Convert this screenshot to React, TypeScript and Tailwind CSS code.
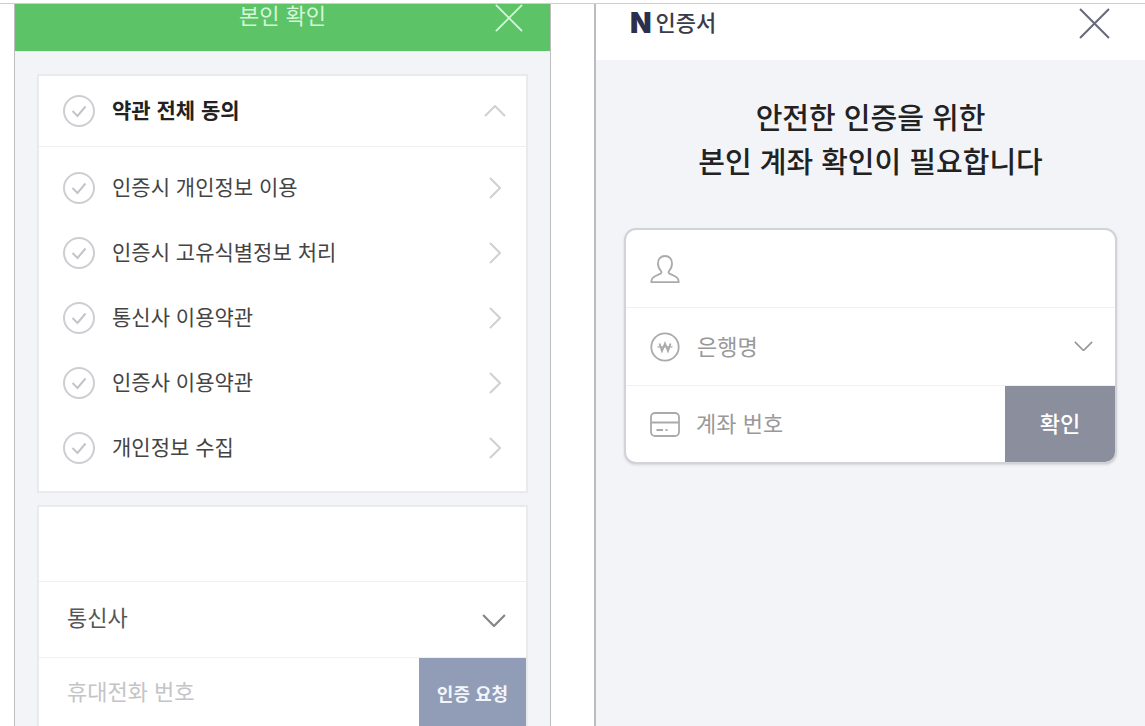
import type { ReactNode } from 'react'

const terms = [
  { id: 'privacy', label: '인증시 개인정보 이용' },
  { id: 'identifier', label: '인증시 고유식별정보 처리' },
  { id: 'carrier', label: '통신사 이용약관' },
  { id: 'certifier', label: '인증사 이용약관' },
  { id: 'collection', label: '개인정보 수집' },
]

function CloseIcon({ className }: { className: string }) {
  return (
    <svg viewBox="0 0 30 30" fill="none" stroke="currentColor" className={className} aria-hidden="true">
      <path d="M1 1l28 28M29 1L1 29" />
    </svg>
  )
}

function Chevron({ className }: { className: string }) {
  return (
    <svg viewBox="0 0 22 12" fill="none" stroke="currentColor" className={className} aria-hidden="true">
      <path d="M1 1l10 10L21 1" />
    </svg>
  )
}

function UserIcon() {
  return (
    <svg viewBox="0 0 30 30" fill="none" stroke="currentColor" strokeWidth="1.8" strokeLinejoin="round" className="size-[30px]" aria-hidden="true">
      <path d="M15 2c-4.600 0-7 3.200-7 7.600 0 3.400 1.300 5.700 3 7.500.8.9.5 2-.5 2.500l-5.500 2.600C2.400 23.500 1.300 25.200 1.300 28.200h27.400c0-3-1.100-4.700-3.700-6l-5.500-2.600c-1-.5-1.300-1.600-.5-2.500 1.700-1.800 3-4.100 3-7.500C22 5.200 19.600 2 15 2z" />
    </svg>
  )
}

function WonIcon() {
  return (
    <svg viewBox="0 0 30 30" fill="none" stroke="currentColor" strokeWidth="1.800" className="size-[30px]" aria-hidden="true">
      <circle cx="15" cy="15" r="13.700" />
      <path d="M9.500 11.500l2.500 7.500 3-7.500 3 7.500 2.500-7.500" strokeWidth="1.900" />
      <path d="M7.500 14.800h15" strokeWidth="1.200" />
    </svg>
  )
}

function CardIcon() {
  return (
    <svg viewBox="0 0 30 30" fill="none" stroke="currentColor" strokeWidth="1.800" className="size-[30px]" aria-hidden="true">
      <rect x="1" y="4" width="28" height="23" rx="4" />
      <path d="M1 13.500h28M6.500 21h6.500M15.500 21h2" />
    </svg>
  )
}

function RoundCheck({ id, label, bold }: { id: string; label: string; bold?: boolean }) {
  return (
    <div className="flex items-center gap-[17px]">
      <span className="relative size-8 shrink-0">
        <input
          id={id}
          type="checkbox"
          className="block size-8 appearance-none rounded-full border-2 border-[#cdced2] checked:border-[#5cc466]"
        />
        <svg
          viewBox="0 0 32 32"
          fill="none"
          stroke="#c3c4c8"
          strokeWidth="2"
          className="pointer-events-none absolute inset-0 size-8"
          aria-hidden="true"
        >
          <path d="M9.500 16l5 5 8-9.500" />
        </svg>
      </span>
      <label
        htmlFor={id}
        className={bold ? 'pb-1 text-[21px] leading-7 font-bold text-[#222]' : 'pb-1 text-[21px] leading-7 text-[#444]'}
      >
        {label}
      </label>
    </div>
  )
}

function FieldRow({ icon, children }: { icon: ReactNode; children?: ReactNode }) {
  return (
    <div className="flex h-[78px] items-center gap-[17px] border-b border-[#f0f0f2] pl-6 text-[#aaa]">
      {icon}
      {children}
    </div>
  )
}

function IdentityPanel() {
  return (
    <section className="border-x border-[#bdbdbf] bg-[#f3f4f8]">
      <header className="grid h-12 grid-cols-[1fr_auto_1fr] items-start border-b border-[#e4f5e6] bg-[#5cc466] text-[#d3f8d8]">
        <h1 className="col-start-2 text-[22px] leading-5">본인 확인</h1>
        <button type="button" aria-label="닫기" className="mr-[27px] justify-self-end">
          <CloseIcon className="size-7 stroke-2" />
        </button>
      </header>

      <div className="px-[22px] pt-[22px]">
        <div className="border-2 border-[#e9eaee] bg-white">
          <div className="flex h-[71px] items-center justify-between border-b border-[#efeff1] pr-5 pl-6">
            <RoundCheck id="all" label="약관 전체 동의" bold />
            <button type="button" aria-label="접기" className="text-[#d0d0d2]">
              <Chevron className="w-[22px] rotate-180 stroke-2" />
            </button>
          </div>
          <ul className="pt-2 pb-[11px]">
            {terms.map((term) => (
              <li key={term.id} className="flex h-[65px] items-center justify-between pr-5 pl-6">
                <RoundCheck id={term.id} label={term.label} />
                <button type="button" aria-label={`${term.label} 보기`} className="text-[#d0d0d2]">
                  <Chevron className="w-[22px] -rotate-90 stroke-2" />
                </button>
              </li>
            ))}
          </ul>
        </div>

        <form className="mt-3 border-2 border-b-0 border-[#e9eaee] bg-white">
          <input aria-label="이름" className="block h-[75px] w-full border-b border-[#f0f0f2] px-7 text-[22px] outline-none" />
          <div className="relative border-b border-[#f0f0f2] text-[#555]">
            <select aria-label="통신사" className="block h-[75px] w-full appearance-none px-7 pb-1.5 text-[22px] outline-none">
              <option>통신사</option>
            </select>
            <Chevron className="pointer-events-none absolute top-8 right-5 w-6 stroke-2 text-[#858585]" />
          </div>
          <div className="flex h-[69px]">
            <input
              type="tel"
              aria-label="휴대전화 번호"
              placeholder="휴대전화 번호"
              className="min-w-0 flex-1 px-7 pb-1 text-[22px] outline-none placeholder:text-[#c4c4c6]"
            />
            <button type="button" className="w-[107px] bg-[#919db6] text-lg font-bold text-[#f3f5fb]">
              인증 요청
            </button>
          </div>
        </form>
      </div>
    </section>
  )
}

function AccountPanel() {
  return (
    <section className="border-l-2 border-[#bdbdbf] bg-[#f3f4f8]">
      <header className="flex h-14 items-center justify-between bg-white pr-[35px] pb-[18px] pl-[34px] text-[#2b2f4e]">
        <div className="flex items-center gap-1">
          <span className="font-[Inter] text-[28px] leading-none font-black">N</span>
          <span className="pb-1 text-[22px] leading-7 font-medium text-[#3a3c4c]">인증서</span>
        </div>
        <button type="button" aria-label="닫기" className="text-[#686a78]">
          <CloseIcon className="size-[31px] stroke-2" />
        </button>
      </header>

      <h2 className="pt-[34px] text-center text-[29px] leading-[44px] font-medium text-[#222]">
        안전한 인증을 위한
        <br />
        본인 계좌 확인이 필요합니다
      </h2>

      <form className="mx-7 mt-[46px] overflow-hidden rounded-xl border-2 border-[#d2d3d8] bg-white shadow-sm">
        <FieldRow icon={<UserIcon />}>
          <input aria-label="이름" className="min-w-0 flex-1 text-[22px] text-[#444] outline-none" />
        </FieldRow>
        <FieldRow icon={<WonIcon />}>
          <div className="relative min-w-0 flex-1">
            <select aria-label="은행명" className="block w-full appearance-none pb-0.5 text-[22px] text-[#999] outline-none">
              <option>은행명</option>
            </select>
            <Chevron className="pointer-events-none absolute top-3 right-[22px] w-[19px] stroke-2 text-[#999]" />
          </div>
        </FieldRow>
        <div className="flex h-[76px] items-center gap-4 pl-6 text-[#aaa]">
          <CardIcon />
          <input
            aria-label="계좌 번호"
            placeholder="계좌 번호"
            className="min-w-0 flex-1 pb-1 text-[22px] outline-none placeholder:text-[#999]"
          />
          <button type="button" className="h-full w-[110px] bg-[#8a8e9d] pb-1 text-[22px] font-medium text-white">
            확인
          </button>
        </div>
      </form>
    </section>
  )
}

export default function App() {
  return (
    <main
      lang="ko"
      className="flex min-h-screen flex-col bg-white pt-[3px] font-['Noto_Sans_CJK_KR',sans-serif]"
    >
      <div className="grid flex-1 grid-cols-[537fr_551fr] gap-x-[43px] border-t border-[#cfcfd1] pl-3.5">
        <IdentityPanel />
        <AccountPanel />
      </div>
    </main>
  )
}
